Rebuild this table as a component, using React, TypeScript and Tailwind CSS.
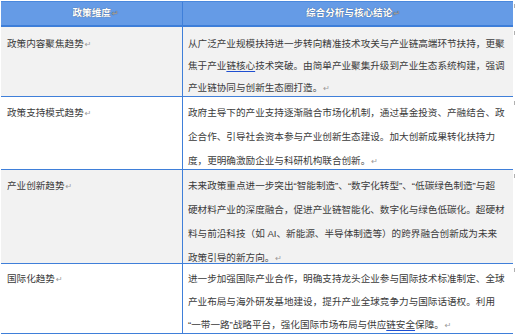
import React from "react";

const FONT = '"Liberation Sans", "Noto Sans CJK SC", sans-serif';

function Ret() {
  return (
    <span className="text-[#9a9a9a] text-[8px] ml-[1px]" style={{ fontFamily: '"DejaVu Sans", sans-serif' }}>
      ↵
    </span>
  );
}

function U({ children }: { children: React.ReactNode }) {
  return <span className="underline decoration-[#1f4fd1] underline-offset-[2px] decoration-[1px]">{children}</span>;
}

type RowProps = {
  left: string;
  lines: React.ReactNode[];
  bg: string;
  h: string;
  pt: string;
  leading: string;
};

function Row({ left, lines, bg, h, pt, leading }: RowProps) {
  return (
    <div className={`relative flex border-b border-[#3f7fd9] ${bg} ${h}`}>
      <div className={`w-[182px] shrink-0 border-r border-[#3f7fd9] pl-[6px] ${pt} ${leading}`}>
        <div className="whitespace-nowrap">
          {left}
          <Ret />
        </div>
      </div>
      <div className={`flex-1 pl-[5px] ${pt} ${leading}`}>
        {lines.map((l, i) => (
          <div key={i} className="whitespace-nowrap">
            {l}
          </div>
        ))}
      </div>
      <div className="absolute right-[-2px] top-[4px] w-px h-[4px] bg-[#b0b0b0]" />
    </div>
  );
}

export default function App() {
  return (
    <div className="w-[515px] h-[336px] bg-white overflow-hidden pt-px pl-px" style={{ fontFamily: FONT }}>
      <div className="w-[512px] text-[9.6px] text-[#3b3b3b]">
        <div className="relative flex h-[26px] bg-[#659be6] border-t border-[#4a88dd] border-b-2 border-b-[#3d7ed9] text-white font-bold [text-shadow:0_0_1px_rgba(40,40,40,0.7)]">
          <div className="w-[182px] shrink-0 border-r border-[#3f7fd9] flex items-center justify-center pl-[8px]">
            <span>政策维度</span>
            <Ret />
          </div>
          <div className="flex-1 flex items-center justify-center pl-[10px]">
            <span>综合分析与核心结论</span>
            <Ret />
          </div>
          <div className="absolute right-[-2px] top-[2px] w-px h-[4px] bg-[#b0b0b0]" />
        </div>
        <Row
          left="政策内容聚焦趋势"
          bg="bg-[#f2f2f2]"
          h="h-[70px]"
          pt="pt-[6px]"
          leading="leading-[22px]"
          lines={[
            "从广泛产业规模扶持进一步转向精准技术攻关与产业链高端环节扶持，更聚",
            <>
              焦于产业<U>链核心</U>技术突破。由简单产业聚集升级到产业生态系统构建，强调
            </>,
            <>
              产业链协同与创新生态圈打造。
              <Ret />
            </>,
          ]}
        />
        <Row
          left="政策支持模式趋势"
          bg="bg-white"
          h="h-[73px]"
          pt="pt-[4px]"
          leading="leading-[24px]"
          lines={[
            "政府主导下的产业支持逐渐融合市场化机制，通过基金投资、产融结合、政",
            "企合作、引导社会资本参与产业创新生态建设。加大创新成果转化扶持力",
            <>
              度，更明确激励企业与科研机构联合创新。
              <Ret />
            </>,
          ]}
        />
        <Row
          left="产业创新趋势"
          bg="bg-[#f2f2f2]"
          h="h-[94px]"
          pt="pt-[4px]"
          leading="leading-[24px]"
          lines={[
            "未来政策重点进一步突出“智能制造”、“数字化转型”、“低碳绿色制造”与超",
            "硬材料产业的深度融合，促进产业链智能化、数字化与绿色低碳化。超硬材",
            "料与前沿科技（如 AI、新能源、半导体制造等）的跨界融合创新成为未来",
            <>
              政策引导的新方向。
              <Ret />
            </>,
          ]}
        />
        <Row
          left="国际化趋势"
          bg="bg-white"
          h="h-[70px]"
          pt="pt-[3px]"
          leading="leading-[23px]"
          lines={[
            "进一步加强国际产业合作，明确支持龙头企业参与国际技术标准制定、全球",
            "产业布局与海外研发基地建设，提升产业全球竞争力与国际话语权。利用",
            <>
              “一带一路”战略平台，强化国际市场布局与供应<U>链安全</U>保障。
              <Ret />
            </>,
          ]}
        />
      </div>
    </div>
  );
}
